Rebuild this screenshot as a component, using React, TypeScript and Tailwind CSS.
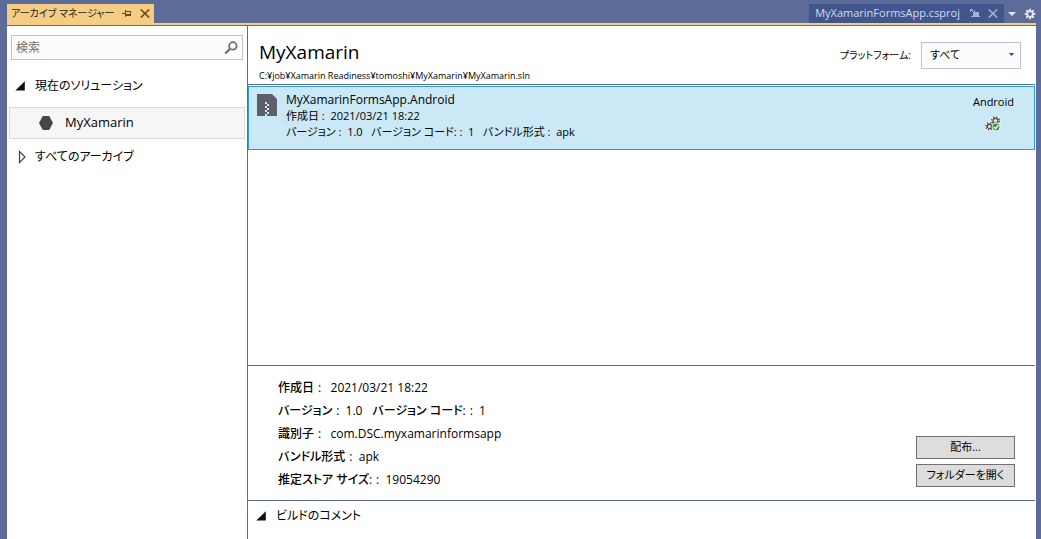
import type { ReactNode } from "react";

function PinIcon() {
  return (
    <svg width="10" height="9" viewBox="0 0 10 9" fill="#6b4a12" shapeRendering="crispEdges" aria-hidden="true">
      <path d="M0 4h3v1H0zM3 1h1v7H3zM4 2h5v1H4zM8 2h1v5H8zM4 5h5v2H4z" />
    </svg>
  );
}

function CloseIcon({ color }: { color: string }) {
  return (
    <svg width="10" height="9" viewBox="0 0 10 9" fill="none" stroke={color} strokeWidth="1.6" aria-hidden="true">
      <path d="M.8.5l8.4 8M9.2.5l-8.4 8" />
    </svg>
  );
}

function KeepOpenIcon() {
  return (
    <svg width="10" height="9" viewBox="0 0 10 9" fill="#a5b1d3" shapeRendering="crispEdges" aria-hidden="true">
      <path d="M0 0h3v1H0zM0 1h1v2H0zM1 1h1v1H1zM2 2h1v1H2zM3 3h1v1H3zM4 1h1v2h4v4h1v1H1V7h2V4h1z" />
    </svg>
  );
}

function GearIcon() {
  return (
    <svg width="12" height="12" viewBox="0 0 12 12" aria-hidden="true">
      <g stroke="#e4e8f4" strokeWidth="2">
        <path d="M6 .8v2.4M6 8.8v2.4M.8 6h2.4M8.8 6h2.4M2.3 2.3L4 4M8 8l1.7 1.7M9.7 2.3L8 4M4 8L2.3 9.7" />
      </g>
      <circle cx="6" cy="6" r="2.8" fill="none" stroke="#e4e8f4" strokeWidth="1.8" />
    </svg>
  );
}

function SearchIcon() {
  return (
    <svg width="14" height="14" viewBox="0 0 14 14" fill="none" stroke="#717171" aria-hidden="true">
      <circle cx="8.9" cy="4.9" r="3.7" strokeWidth="1.8" />
      <path d="M6 7.8L1.2 12.5" strokeWidth="2.4" />
    </svg>
  );
}

function ExpandedIcon() {
  return (
    <svg width="10" height="10" viewBox="0 0 10 10" className="shrink-0" aria-hidden="true">
      <path d="M9.8 .3v9.2H.3z" fill="#111" />
    </svg>
  );
}

function CollapsedIcon() {
  return (
    <svg width="10" height="14" viewBox="0 0 10 14" className="shrink-0" aria-hidden="true">
      <path d="M2.5 1.5v11L8 7z" fill="#fff" stroke="#444" strokeWidth="1.2" />
    </svg>
  );
}

function HexagonIcon() {
  return (
    <svg width="14" height="14" viewBox="0 0 14 14" className="shrink-0" aria-hidden="true">
      <path d="M3.8 0h6.4L14 7l-3.8 7H3.8L0 7z" fill="#464646" />
    </svg>
  );
}

function ZipIcon() {
  return (
    <svg width="20" height="22" viewBox="0 0 20 22" className="shrink-0" aria-hidden="true">
      <path d="M0 0h15l5 5v17H0z" fill="#5f5f6b" />
      <path
        d="M8 8h2v2H8zM10 10h2v2h-2zM8 12h2v2H8zM10 14h2v2h-2zM8 16h2v2H8zM10 18h2v2h-2zM8 20h2v2H8z"
        fill="#cbe8f6"
      />
    </svg>
  );
}

function BuildOkIcon() {
  return (
    <svg width="16" height="16" viewBox="0 0 16 16" aria-hidden="true">
      <g fill="none" stroke="#f7f7f5">
        <circle cx="10.5" cy="4.8" r="3.6" strokeWidth="3.4" />
        <circle cx="4.4" cy="10.4" r="3.2" strokeWidth="3.4" />
      </g>
      <g fill="none" stroke="#4a4a4a">
        <circle cx="10.5" cy="4.8" r="2.5" strokeWidth="1.2" />
        <circle cx="10.5" cy="4.8" r="3.8" strokeWidth="1.6" strokeDasharray="1.49 1.49" />
        <circle cx="4.4" cy="10.4" r="2.1" strokeWidth="1.2" />
        <circle cx="4.4" cy="10.4" r="3.4" strokeWidth="1.6" strokeDasharray="1.33 1.33" />
      </g>
      <circle cx="11" cy="11" r="4" fill="#339933" stroke="#f7f7f5" strokeWidth="0.8" />
      <path d="M8.8 11l1.6 1.7 2.9-3.5" fill="none" stroke="#fff" strokeWidth="1.4" />
    </svg>
  );
}

function Detail({ label, children }: { label: string; children: ReactNode }) {
  return (
    <div className="flex gap-1">
      <dt className="font-medium">{label}</dt>
      <dd className="whitespace-pre">{children}</dd>
    </div>
  );
}

function TabBar() {
  return (
    <header className="flex h-[25px] items-end justify-between border-b-2 border-[#f5cc84] pt-1">
      <div className="flex h-full items-center bg-[#f5cc84] pr-1 pl-1">
        <span className="text-[10px] whitespace-nowrap text-[#1e1e1e]">アーカイブ マネージャー</span>
        <button type="button" aria-label="ピン留め" className="ml-2 flex">
          <PinIcon />
        </button>
        <button type="button" aria-label="閉じる" className="ml-2 flex">
          <CloseIcon color="#6b4a12" />
        </button>
      </div>
      <div className="flex h-full items-center">
        <div className="flex h-full items-center bg-[#40568d] pr-1.5 pl-1.5 text-[11px] text-[#d3dbf0]">
          <span className="whitespace-nowrap">MyXamarinFormsApp.csproj</span>
          <button type="button" aria-label="開いたままにする" className="ml-2.5 flex">
            <KeepOpenIcon />
          </button>
          <button type="button" aria-label="ドキュメントを閉じる" className="ml-2 flex">
            <CloseIcon color="#a5b1d3" />
          </button>
        </div>
        <button type="button" aria-label="ドキュメント一覧" className="ml-1 flex">
          <svg width="8" height="4" viewBox="0 0 8 4" aria-hidden="true">
            <path d="M0 0h8L4 4z" fill="#e4e8f4" />
          </svg>
        </button>
        <button type="button" aria-label="設定" className="ml-2 flex">
          <GearIcon />
        </button>
      </div>
    </header>
  );
}

function Sidebar() {
  return (
    <aside className="w-60 shrink-0">
      <label className="mx-1 mt-[9px] flex h-[25px] items-center border border-[#b9c3dc] bg-[#fcfcfc] px-1">
        <input
          type="text"
          aria-label="検索"
          placeholder="検索"
          className="min-w-0 flex-1 bg-transparent outline-none placeholder:text-[#717171]"
        />
        <SearchIcon />
      </label>
      <nav className="mt-4">
        <button type="button" className="flex h-5 items-center gap-2.5 pl-2">
          <ExpandedIcon />
          現在のソリューション
        </button>
        <a
          href="#myxamarin"
          className="mx-0.5 mt-[11px] flex h-8 items-center gap-3 border border-[#d9d9d9] bg-[#f6f6f6] pl-[29px] text-[13px]"
        >
          <HexagonIcon />
          MyXamarin
        </a>
        <button type="button" className="mt-2 flex h-5 items-center gap-2 pl-2.5">
          <CollapsedIcon />
          すべてのアーカイブ
        </button>
      </nav>
    </aside>
  );
}

export default function App() {
  return (
    <div className="flex min-h-screen flex-col bg-[#5d6b99] pr-[5px] pl-[7px] font-['Open_Sans','Noto_Sans_CJK_JP',sans-serif] text-xs text-black [font-feature-settings:'palt']">
      <TabBar />
      <div className="mt-px flex flex-1 bg-white pr-px">
        <Sidebar />
        <main className="flex min-w-0 flex-1 flex-col border-l border-[#5d6b99]">
          <div className="flex h-[59px] items-start justify-between border-b border-[#5d6b99] pr-3.5 pl-[11px]">
            <div>
              <h1 className="mt-3 text-[19px] leading-7">MyXamarin</h1>
              <p className="mt-0.5 text-[9px] leading-4">C:¥job¥Xamarin Readiness¥tomoshi¥MyXamarin¥MyXamarin.sln</p>
            </div>
            <div className="mt-4 flex items-center gap-2.5">
              <label htmlFor="platform" className="text-[10px]">
                プラットフォーム:
              </label>
              <div className="relative">
                <select
                  id="platform"
                  className="h-[27px] w-[100px] appearance-none border border-[#b9c3dc] bg-[#fcfcfc] pl-2 text-[11px] outline-none"
                >
                  <option>すべて</option>
                </select>
                <svg
                  width="5"
                  height="3"
                  viewBox="0 0 5 3"
                  className="pointer-events-none absolute top-[11px] right-[7px]"
                  aria-hidden="true"
                >
                  <path d="M0 0h5L2.5 3z" fill="#444" />
                </svg>
              </div>
            </div>
          </div>

          <section className="h-[281px] border-b border-[#5d6b99] pt-px">
            <article className="flex h-16 justify-between border border-[#26a0da] bg-[#cbe8f6] pt-[5px] pr-5 pl-2">
              <div className="flex gap-[9px]">
                <div className="pt-0.5">
                  <ZipIcon />
                </div>
                <div className="text-[11px] leading-4 whitespace-pre">
                  <h2 className="text-xs leading-4">MyXamarinFormsApp.Android</h2>
                  <p>作成日 :  2021/03/21 18:22</p>
                  <p>バージョン :  1.0   バージョン コード: :  1   バンドル形式 :  apk</p>
                </div>
              </div>
              <div className="flex flex-col items-center gap-1.5 pt-[3px] text-[11px]">
                <span>Android</span>
                <BuildOkIcon />
              </div>
            </article>
          </section>

          <section className="flex h-[135px] justify-between border-b border-[#5d6b99] pr-5 pl-[30px]">
            <dl className="mt-2.5 leading-[23px]">
              <Detail label="作成日">:   2021/03/21 18:22</Detail>
              <div className="flex gap-2.5">
                <Detail label="バージョン">:  1.0</Detail>
                <Detail label="バージョン コード:">:  1</Detail>
              </div>
              <Detail label="識別子">:   com.DSC.myxamarinformsapp</Detail>
              <Detail label="バンドル形式">:  apk</Detail>
              <Detail label="推定ストア サイズ:">:  19054290</Detail>
            </dl>
            <div className="mb-[13px] flex w-[99px] flex-col gap-[5px] self-end text-[11px]">
              <button type="button" className="h-[23px] border border-[#707070] bg-[#ddd]">
                配布...
              </button>
              <button type="button" className="h-[23px] border border-[#707070] bg-[#ddd]">
                フォルダーを開く
              </button>
            </div>
          </section>

          <button type="button" className="mt-[5px] flex h-5 items-center gap-2.5 pl-2">
            <ExpandedIcon />
            ビルドのコメント
          </button>
        </main>
      </div>
    </div>
  );
}
